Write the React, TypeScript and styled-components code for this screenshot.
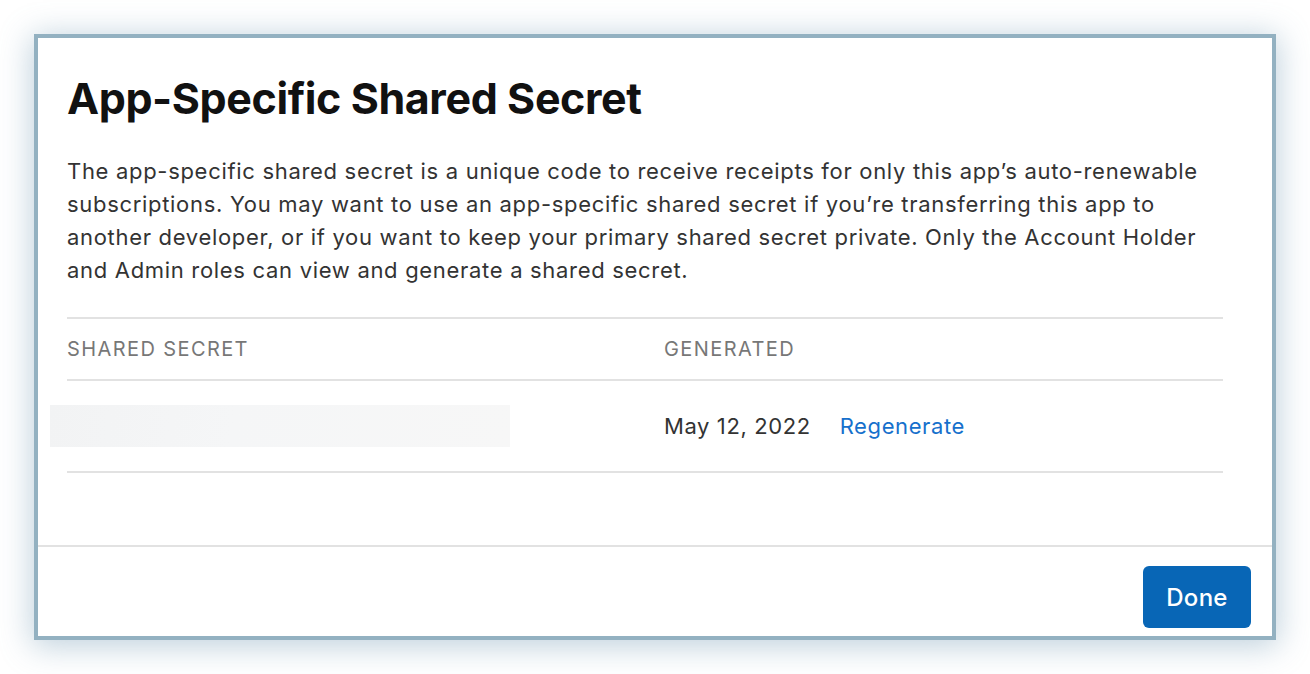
import React from 'react';
import styled, { createGlobalStyle } from 'styled-components';

const GlobalStyle = createGlobalStyle`
    html, body {
        margin:0;
        padding:0;
        background:#ffffff;
    }
    body {
        font-family: Inter, "Noto Sans", "Liberation Sans", sans-serif;
        -webkit-font-smoothing:antialiased;
    }
`;

const Page = styled.div`
    box-sizing:border-box;
    width:1310px;
    height:674px;
    padding:34px;
`;

const Frame = styled.div`
    box-sizing:border-box;
    width:1242px;
    height:606px;
    border:4px solid #93b1c1;
    background:#ffffff;
    box-shadow:0 4px 30px 2px rgba(110,150,178,0.45);
    display:flex;
    flex-direction:column;
`;

const Body = styled.div`
    box-sizing:border-box;
    height:509px;
    padding:34px 49px 0 29px;
    border-bottom:2px solid #e2e2e2;
`;

const Title = styled.h1`
    margin:0;
    font-size:43px;
    line-height:52px;
    font-weight:700;
    color:#111111;
    letter-spacing:-0.4px;
`;

const Description = styled.p`
    margin:31px 0 0 0;
    font-size:22px;
    line-height:33px;
    color:#333333;
    letter-spacing:0.69px;
`;

const Table = styled.div`
    margin-top:30px;
    display:grid;
    grid-template-columns:597px 1fr;
    border-top:2px solid #e2e2e2;
`;

const HeadCell = styled.div`
    height:60px;
    display:flex;
    align-items:center;
    font-size:20px;
    color:#777777;
    text-transform:uppercase;
    letter-spacing:1.4px;
    border-bottom:2px solid #e2e2e2;
`;

const Cell = styled.div`
    height:90px;
    display:flex;
    align-items:center;
    font-size:22px;
    color:#333333;
    letter-spacing:0.6px;
    border-bottom:2px solid #e2e2e2;
`;

const SecretMask = styled.div`
    margin-left:-17px;
    width:460px;
    height:42px;
    background:linear-gradient(100deg, #f2f3f4 0%, #f5f6f7 40%, #f7f7f7 100%);
`;

const LinkButton = styled.a`
    margin-left:29px;
    color:#1670cc;
    text-decoration:none;
    cursor:pointer;
`;

const Footer = styled.div`
    flex:1;
    display:flex;
    justify-content:flex-end;
    align-items:flex-start;
    padding:19px 21px 0 0;
`;

const DoneButton = styled.button`
    width:108px;
    height:62px;
    border:0;
    border-radius:6px;
    background:#0866b6;
    color:#ffffff;
    font-family:inherit;
    font-size:24px;
    font-weight:500;
    letter-spacing:0.3px;
    cursor:pointer;
`;

const App = () => {
    return (
        <>
            <GlobalStyle />
            <Page>
                <Frame>
                    <Body>
                        <Title>App-Specific Shared Secret</Title>
                        <Description>
                            The app-specific shared secret is a unique code to receive receipts for only this app’s auto-renewable<br />
                            subscriptions. You may want to use an app-specific shared secret if you’re transferring this app to<br />
                            another developer, or if you want to keep your primary shared secret private. Only the Account Holder<br />
                            and Admin roles can view and generate a shared secret.
                        </Description>
                        <Table>
                            <HeadCell>Shared Secret</HeadCell>
                            <HeadCell>Generated</HeadCell>
                            <Cell><SecretMask /></Cell>
                            <Cell>
                                May 12, 2022
                                <LinkButton>Regenerate</LinkButton>
                            </Cell>
                        </Table>
                    </Body>
                    <Footer>
                        <DoneButton>Done</DoneButton>
                    </Footer>
                </Frame>
            </Page>
        </>
    );
}

export default App;
